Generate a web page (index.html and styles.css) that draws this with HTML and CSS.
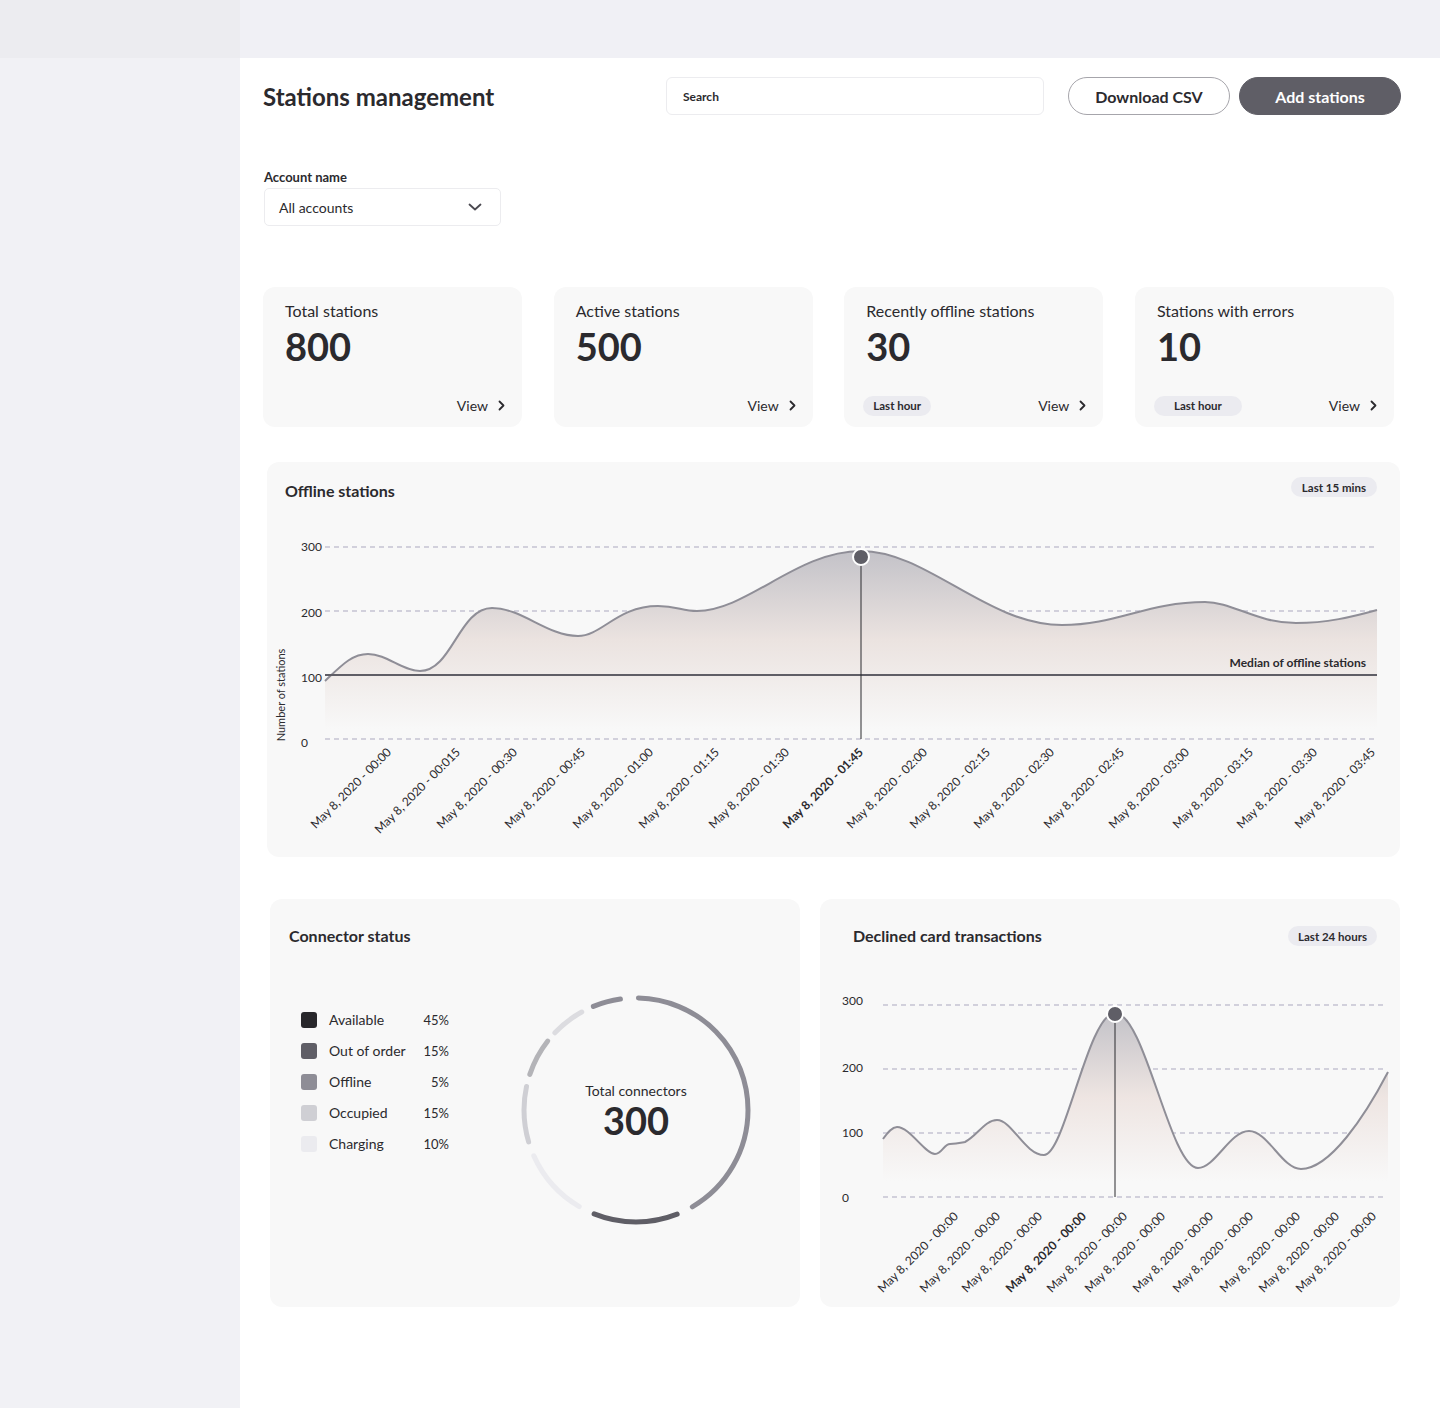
FILE: index.html
```html
<!DOCTYPE html>
<html lang="en">
<head>
<meta charset="utf-8">
<title>Stations management</title>
<link rel="stylesheet" href="styles.css">
</head>
<body>
<div class="app">
  <aside class="sidebar">
    <div class="sidebar-top"></div>
  </aside>

  <main class="main">
    <div class="topbar"></div>

    <div class="content">
      <header class="page-head">
        <h1 class="page-title">Stations management</h1>
        <div class="search">Search</div>
        <button class="btn btn-outline">Download CSV</button>
        <button class="btn btn-solid">Add stations</button>
      </header>

      <section class="account">
        <label class="account-label">Account name</label>
        <div class="select">
          <span>All accounts</span>
          <svg class="select-chevron" width="14" height="8" viewBox="0 0 14 8"><path d="M1.5 1.5 L7 6.5 L12.5 1.5" fill="none" stroke="#4a4950" stroke-width="1.8" stroke-linecap="round" stroke-linejoin="round"/></svg>
        </div>
      </section>

      <section class="stats">
        <div class="stat-card">
          <div class="stat-title">Total stations</div>
          <div class="stat-value">800</div>
          <div class="stat-foot">
            <a class="view-link">View <svg width="7" height="11" viewBox="0 0 7 11"><path d="M1.5 1.5 L5.5 5.5 L1.5 9.5" fill="none" stroke="#2b2a2e" stroke-width="1.8" stroke-linecap="round" stroke-linejoin="round"/></svg></a>
          </div>
        </div>
        <div class="stat-card">
          <div class="stat-title">Active stations</div>
          <div class="stat-value">500</div>
          <div class="stat-foot">
            <a class="view-link">View <svg width="7" height="11" viewBox="0 0 7 11"><path d="M1.5 1.5 L5.5 5.5 L1.5 9.5" fill="none" stroke="#2b2a2e" stroke-width="1.8" stroke-linecap="round" stroke-linejoin="round"/></svg></a>
          </div>
        </div>
        <div class="stat-card">
          <div class="stat-title">Recently offline stations</div>
          <div class="stat-value">30</div>
          <div class="stat-foot">
            <span class="pill">Last hour</span>
            <a class="view-link">View <svg width="7" height="11" viewBox="0 0 7 11"><path d="M1.5 1.5 L5.5 5.5 L1.5 9.5" fill="none" stroke="#2b2a2e" stroke-width="1.8" stroke-linecap="round" stroke-linejoin="round"/></svg></a>
          </div>
        </div>
        <div class="stat-card">
          <div class="stat-title">Stations with errors</div>
          <div class="stat-value">10</div>
          <div class="stat-foot">
            <span class="pill pill-wide">Last hour</span>
            <a class="view-link">View <svg width="7" height="11" viewBox="0 0 7 11"><path d="M1.5 1.5 L5.5 5.5 L1.5 9.5" fill="none" stroke="#2b2a2e" stroke-width="1.8" stroke-linecap="round" stroke-linejoin="round"/></svg></a>
          </div>
        </div>
      </section>

      <section class="panel panel-offline">
        <div class="panel-head panel-head-offline">
          <h2 class="panel-title panel-title-low">Offline stations</h2>
          <span class="pill pill-mid">Last 15 mins</span>
        </div>
        <svg class="chart" width="1133" height="360" viewBox="0 0 1133 360">
          <defs>
            <linearGradient id="offlineFill" gradientUnits="userSpaceOnUse" x1="0" y1="54" x2="0" y2="232">
              <stop offset="0" stop-color="#c3c2c8"/>
              <stop offset="0.5" stop-color="#ebe3e0"/>
              <stop offset="1" stop-color="#f8f8f8"/>
            </linearGradient>
          </defs>
          <g class="grid">
            <line x1="58" y1="50" x2="1110" y2="50"/>
            <line x1="58" y1="114" x2="1110" y2="114"/>
            <line x1="58" y1="242" x2="1110" y2="242"/>
          </g>
          <g class="y-labels">
            <text x="34" y="54">300</text>
            <text x="34" y="120">200</text>
            <text x="34" y="185">100</text>
            <text x="34" y="250">0</text>
          </g>
          <text class="axis-title" transform="translate(18 198) rotate(-90)" text-anchor="middle">Number of stations</text>

          <path fill="url(#offlineFill)" d="M58,184 C75,168 85,157 101,157 C120,157 135,174 153,174 C185,174 192,111 225,111 C255,111 280,139 311,139 C335,139 350,109 391,109 C410,109 415,114 430,114 C480,114 530,54 594,54 C660,54 720,128 795,128 C850,128 880,105 938,105 C965,105 990,126 1029,126 C1060,126 1085,120 1110,113 L1110,236 L58,236 Z"/>
          <path class="curve" d="M58,184 C75,168 85,157 101,157 C120,157 135,174 153,174 C185,174 192,111 225,111 C255,111 280,139 311,139 C335,139 350,109 391,109 C410,109 415,114 430,114 C480,114 530,54 594,54 C660,54 720,128 795,128 C850,128 880,105 938,105 C965,105 990,126 1029,126 C1060,126 1085,120 1110,113"/>

          <line class="median" x1="58" y1="178" x2="1110" y2="178"/>
          <text class="median-label" x="1099" y="170" text-anchor="end">Median of offline stations</text>

          <line class="cursor" x1="594" y1="60" x2="594" y2="242"/>
          <circle class="marker" cx="594" cy="60" r="8"/>

          <g class="x-labels">
            <text transform="translate(125 256) rotate(-45)">May 8, 2020 - 00:00</text>
            <text transform="translate(194 256) rotate(-45)">May 8, 2020 - 00:015</text>
            <text transform="translate(251 256) rotate(-45)">May 8, 2020 - 00:30</text>
            <text transform="translate(319 256) rotate(-45)">May 8, 2020 - 00:45</text>
            <text transform="translate(387 256) rotate(-45)">May 8, 2020 - 01:00</text>
            <text transform="translate(453 256) rotate(-45)">May 8, 2020 - 01:15</text>
            <text transform="translate(523 256) rotate(-45)">May 8, 2020 - 01:30</text>
            <text class="x-active" transform="translate(597 256) rotate(-45)">May 8, 2020 - 01:45</text>
            <text transform="translate(661 256) rotate(-45)">May 8, 2020 - 02:00</text>
            <text transform="translate(724 256) rotate(-45)">May 8, 2020 - 02:15</text>
            <text transform="translate(788 256) rotate(-45)">May 8, 2020 - 02:30</text>
            <text transform="translate(858 256) rotate(-45)">May 8, 2020 - 02:45</text>
            <text transform="translate(923 256) rotate(-45)">May 8, 2020 - 03:00</text>
            <text transform="translate(987 256) rotate(-45)">May 8, 2020 - 03:15</text>
            <text transform="translate(1051 256) rotate(-45)">May 8, 2020 - 03:30</text>
            <text transform="translate(1109 256) rotate(-45)">May 8, 2020 - 03:45</text>
          </g>
        </svg>
      </section>

      <section class="bottom-row">
        <div class="panel panel-connectors">
          <div class="panel-head panel-head-connectors">
            <h2 class="panel-title">Connector status</h2>
          </div>
          <div class="connector-body">
            <ul class="legend">
              <li><span class="swatch sw-1"></span><span class="legend-name">Available</span><span class="legend-pct">45%</span></li>
              <li><span class="swatch sw-2"></span><span class="legend-name">Out of order</span><span class="legend-pct">15%</span></li>
              <li><span class="swatch sw-3"></span><span class="legend-name">Offline</span><span class="legend-pct">5%</span></li>
              <li><span class="swatch sw-4"></span><span class="legend-name">Occupied</span><span class="legend-pct">15%</span></li>
              <li><span class="swatch sw-5"></span><span class="legend-name">Charging</span><span class="legend-pct">10%</span></li>
            </ul>
            <div class="donut">
              <svg width="240" height="240" viewBox="0 0 240 240">
                <g transform="rotate(-90 120 120)" fill="none" stroke-width="5" stroke-linecap="round">
                  <circle cx="120" cy="120" r="112" stroke="#8e8d96" stroke-dasharray="290 800" stroke-dashoffset="-2.5"/>
                  <circle cx="120" cy="120" r="112" stroke="#5f5e66" stroke-dasharray="85 800" stroke-dashoffset="-309.4"/>
                  <circle cx="120" cy="120" r="112" stroke="#ebebef" stroke-dasharray="69 800" stroke-dashoffset="-411"/>
                  <circle cx="120" cy="120" r="112" stroke="#cfcfd4" stroke-dasharray="56 800" stroke-dashoffset="-495"/>
                  <circle cx="120" cy="120" r="112" stroke="#b4b4b8" stroke-dasharray="38 800" stroke-dashoffset="-563.5"/>
                  <circle cx="120" cy="120" r="112" stroke="#dcdce0" stroke-dasharray="34 800" stroke-dashoffset="-612.4"/>
                  <circle cx="120" cy="120" r="112" stroke="#8e8d96" stroke-dasharray="28 800" stroke-dashoffset="-659.3"/>
                </g>
              </svg>
              <div class="donut-center">
                <div class="donut-label">Total connectors</div>
                <div class="donut-value">300</div>
              </div>
            </div>
          </div>
        </div>

        <div class="panel panel-declined">
          <div class="panel-head panel-head-declined">
            <h2 class="panel-title">Declined card transactions</h2>
            <span class="pill">Last 24 hours</span>
          </div>
          <svg class="chart" width="580" height="361" viewBox="0 0 580 361">
            <defs>
              <linearGradient id="declinedFill" gradientUnits="userSpaceOnUse" x1="0" y1="67" x2="0" y2="235">
                <stop offset="0" stop-color="#c3c2c8"/>
                <stop offset="0.5" stop-color="#eee5e2"/>
                <stop offset="1" stop-color="#f8f8f8"/>
              </linearGradient>
            </defs>
            <g class="grid">
              <line x1="63" y1="59" x2="567" y2="59"/>
              <line x1="63" y1="123" x2="567" y2="123"/>
              <line x1="63" y1="187" x2="567" y2="187"/>
              <line x1="63" y1="251" x2="567" y2="251"/>
            </g>
            <g class="y-labels">
              <text x="22" y="59">300</text>
              <text x="22" y="126">200</text>
              <text x="22" y="191">100</text>
              <text x="22" y="256">0</text>
            </g>

            <path fill="url(#declinedFill)" d="M63,193 C68,186 72,181 77,181 C90,181 105,208 115,208 C122,208 124,198 130,198 C137,198 140,197 145,196 C157,190 165,174 177,174 C192,174 205,209 224,209 C245,209 268,67 295,67 C325,67 350,222 378,222 C395,222 410,185 429,185 C448,185 462,223 481,223 C510,223 545,170 568,126 L568,240 L63,240 Z"/>
            <path class="curve" d="M63,193 C68,186 72,181 77,181 C90,181 105,208 115,208 C122,208 124,198 130,198 C137,198 140,197 145,196 C157,190 165,174 177,174 C192,174 205,209 224,209 C245,209 268,67 295,67 C325,67 350,222 378,222 C395,222 410,185 429,185 C448,185 462,223 481,223 C510,223 545,170 568,126"/>

            <line class="cursor" x1="295" y1="68" x2="295" y2="251"/>
            <circle class="marker" cx="295" cy="68" r="8"/>

            <g class="x-labels">
              <text transform="translate(139 271) rotate(-45)">May 8, 2020 - 00:00</text>
              <text transform="translate(181 271) rotate(-45)">May 8, 2020 - 00:00</text>
              <text transform="translate(223 271) rotate(-45)">May 8, 2020 - 00:00</text>
              <text class="x-active" transform="translate(267 271) rotate(-45)">May 8, 2020 - 00:00</text>
              <text transform="translate(308 271) rotate(-45)">May 8, 2020 - 00:00</text>
              <text transform="translate(346 271) rotate(-45)">May 8, 2020 - 00:00</text>
              <text transform="translate(394 271) rotate(-45)">May 8, 2020 - 00:00</text>
              <text transform="translate(434 271) rotate(-45)">May 8, 2020 - 00:00</text>
              <text transform="translate(481 271) rotate(-45)">May 8, 2020 - 00:00</text>
              <text transform="translate(520 271) rotate(-45)">May 8, 2020 - 00:00</text>
              <text transform="translate(557 271) rotate(-45)">May 8, 2020 - 00:00</text>
            </g>
          </svg>
        </div>
      </section>
    </div>
  </main>
</div>
</body>
</html>
```
FILE: styles.css
```css
* { box-sizing: border-box; }

html, body {
  margin: 0;
  padding: 0;
}

body {
  font-family: "Lato", "Noto Sans", "Liberation Sans", sans-serif;
  color: #2b2a2e;
  background: #ffffff;
}

.app {
  display: grid;
  grid-template-columns: 240px 1fr;
  min-height: 1408px;
}

/* ---------- sidebar ---------- */
.sidebar {
  background: #f1f1f5;
}
.sidebar-top {
  height: 58px;
  background: #ececf0;
}

/* ---------- main ---------- */
.main {
  background: #ffffff;
}
.topbar {
  height: 58px;
  background: #f0f0f5;
}
.content {
  padding: 19px 39px 0 23px;
}

/* header row */
.page-head {
  display: flex;
  align-items: center;
  height: 38px;
}
.page-title {
  flex: 1;
  margin: 0;
  font-size: 24px;
  font-weight: 700;
  color: #2b2a2e;
}
.search {
  width: 378px;
  height: 38px;
  border: 1px solid #ececef;
  border-radius: 6px;
  background: #fff;
  padding: 0 16px;
  display: flex;
  align-items: center;
  font-size: 12px;
  font-weight: 700;
  color: #2b2a2e;
}
.btn {
  height: 38px;
  width: 162px;
  border-radius: 19px;
  font-family: inherit;
  font-size: 16px;
  font-weight: 700;
  cursor: pointer;
}
.btn-outline {
  margin-left: 24px;
  background: #fff;
  border: 1px solid #a6a5ab;
  color: #2b2a2e;
}
.btn-solid {
  margin-left: 9px;
  background: #5f5e66;
  border: 1px solid #5f5e66;
  color: #ffffff;
}

/* account selector */
.account {
  margin-top: 54px;
  margin-left: 1px;
}
.account-label {
  display: block;
  font-size: 13px;
  font-weight: 700;
  line-height: 17px;
  margin-bottom: 2px;
}
.select {
  width: 237px;
  height: 38px;
  border: 1px solid #ececef;
  border-radius: 5px;
  display: flex;
  align-items: center;
  justify-content: space-between;
  padding: 0 18px 0 14px;
  font-size: 14px;
  color: #2b2a2e;
}

/* stat cards */
.stats {
  margin-top: 61px;
  width: 1131px;
  display: grid;
  grid-template-columns: repeat(4, 259px);
  justify-content: space-between;
}
.stat-card {
  height: 140px;
  background: #f8f8f8;
  border-radius: 12px;
  padding: 14px 17px 12px 22px;
  display: flex;
  flex-direction: column;
}
.stat-title {
  font-size: 16px;
  line-height: 20px;
}
.stat-value {
  margin-top: 3px;
  font-size: 38px;
  line-height: 44px;
  font-weight: 700;
}
.stat-foot {
  margin-top: auto;
  display: flex;
  align-items: center;
  justify-content: flex-end;
  height: 19px;
}
.stat-foot .pill {
  margin-right: auto;
  margin-left: -3px;
}
.view-link {
  display: flex;
  align-items: center;
  gap: 10px;
  font-size: 14px;
  color: #2b2a2e;
}

.pill {
  display: inline-flex;
  align-items: center;
  height: 20px;
  padding: 0 10px;
  border-radius: 10px;
  background: #ebebf0;
  font-size: 11.5px;
  font-weight: 700;
  color: #2b2a2e;
}
.pill-wide {
  padding: 0 20px;
}
.pill-mid {
  padding: 0 11px;
}

/* panels */
.panel {
  background: #f8f8f8;
  border-radius: 12px;
}
.panel-head {
  display: flex;
  justify-content: space-between;
  align-items: flex-start;
}
.panel-title {
  margin: 0;
  font-size: 16px;
  line-height: 20px;
  font-weight: 700;
}
.panel-title-low {
  margin-top: 4px;
}

.panel-offline {
  margin-top: 35px;
  margin-left: 4px;
  width: 1133px;
  height: 395px;
}
.panel-head-offline {
  height: 35px;
  padding: 15px 23px 0 18px;
}

.chart {
  display: block;
  overflow: visible;
}
.chart .grid line {
  stroke: #aba8bf;
  stroke-width: 1;
  stroke-dasharray: 5 4;
}
.chart .y-labels text {
  font-size: 12px;
  fill: #2b2a2e;
}
.chart .axis-title {
  font-size: 11px;
  fill: #2b2a2e;
}
.chart .curve {
  fill: none;
  stroke: #8f8e97;
  stroke-width: 2;
}
.chart .median {
  stroke: #5f5e66;
  stroke-width: 2;
}
.chart .median-label {
  font-size: 12px;
  font-weight: 700;
  fill: #2b2a2e;
}
.chart .cursor {
  stroke: #2b2a2e;
  stroke-width: 1;
}
.chart .marker {
  fill: #5f5e66;
  stroke: #ffffff;
  stroke-width: 2;
}
.chart .x-labels text {
  font-size: 12px;
  fill: #2b2a2e;
  text-anchor: end;
}
.chart .x-labels .x-active {
  font-weight: 700;
}

/* bottom row */
.bottom-row {
  margin-top: 42px;
  margin-left: 7px;
  display: grid;
  grid-template-columns: 530px 580px;
  column-gap: 20px;
}
.panel-connectors,
.panel-declined {
  height: 408px;
}
.panel-head-connectors {
  height: 47px;
  padding: 27px 20px 0 19px;
}
.panel-head-declined {
  height: 47px;
  padding: 27px 23px 0 33px;
}

.connector-body {
  display: flex;
  align-items: flex-start;
  margin-top: 44px;
  padding-left: 31px;
}
.legend {
  list-style: none;
  margin: 14px 0 0 0;
  padding: 0;
  width: 148px;
}
.legend li {
  display: grid;
  grid-template-columns: 16px 1fr auto;
  column-gap: 12px;
  align-items: center;
  height: 31px;
  font-size: 14px;
}
.legend-pct {
  font-size: 13px;
}
.swatch {
  width: 16px;
  height: 16px;
  border-radius: 3px;
}
.sw-1 { background: #28272b; }
.sw-2 { background: #5f5e66; }
.sw-3 { background: #8e8d96; }
.sw-4 { background: #cfcfd4; }
.sw-5 { background: #ebebef; }

.donut {
  margin-left: 67px;
  display: grid;
  width: 240px;
  height: 240px;
}
.donut svg,
.donut-center {
  grid-area: 1 / 1;
}
.donut-center {
  place-self: center;
  text-align: center;
  padding-top: 2px;
}
.donut-label {
  font-size: 14px;
  line-height: 18px;
}
.donut-value {
  font-size: 38px;
  line-height: 40px;
  font-weight: 700;
}
```
